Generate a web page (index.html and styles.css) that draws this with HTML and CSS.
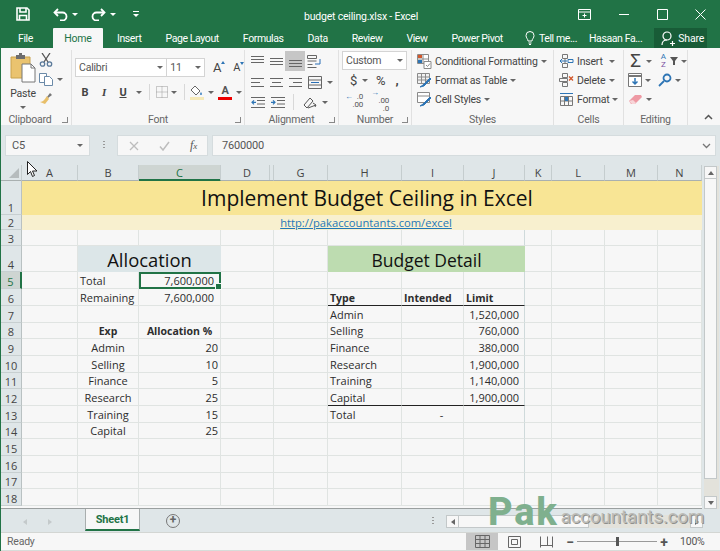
FILE: index.html
```html
<!DOCTYPE HTML>
<html>
	<head>
		<meta http-equiv="Content-Type" content="text/html; charset=UTF-8" />
		<title>budget ceiling.xlsx - Excel</title>
		<link rel="stylesheet" href="styles.css">
	</head>
	<body>
		<div class="app">
			<div class="titlebar">
				<div class="qat">
					<svg class="qat_save" width="14" height="14" viewBox="0 0 14 14" fill="none" stroke="#fff" stroke-width="1.6"><path d="M1 1h10l2 2v10H1z"/><path d="M4 1v4h6V1M3.500 13V8.500h7V13"/></svg>
					<svg class="qat_undo" width="15" height="13" viewBox="0 0 15 13" fill="none" stroke="#fff" stroke-width="1.8"><path d="M5 1 1.500 4.500 5 8"/><path d="M2 4.500h7.500a4 4 0 0 1 0 8H7"/></svg>
					<span class="caret caret--white"></span>
					<svg class="qat_redo" width="15" height="13" viewBox="0 0 15 13" fill="none" stroke="#fff" stroke-width="1.8"><path d="M10 1l3.500 3.500L10 8"/><path d="M13 4.500H5.500a4 4 0 0 0 0 8H8"/></svg>
					<span class="caret caret--white"></span>
					<span class="qat_more"><i></i><span class="caret caret--white"></span></span>
				</div>
				<div class="doc_title">budget ceiling.xlsx - Excel</div>
				<div class="win_btns">
					<svg width="13" height="11" viewBox="0 0 13 11" fill="none" stroke="#fff"><path d="M.5.500h12v10H.5zM.5 3h12M6.500 4.500v4M4.500 6.500h4"/></svg>
					<svg width="12" height="11" viewBox="0 0 12 11" fill="none" stroke="#fff"><path d="M1 5.500h10"/></svg>
					<svg width="11" height="11" viewBox="0 0 11 11" fill="none" stroke="#fff"><path d="M.5.500h10v10H.5z"/></svg>
					<svg width="11" height="11" viewBox="0 0 11 11" fill="none" stroke="#fff"><path d="M.5.500l10 10M10.500.500l-10 10"/></svg>
				</div>
			</div>

			<div class="tabs">
				<span class="tab tab--file">File</span>
				<span class="tab tab--on">Home</span>
				<span class="tab">Insert</span>
				<span class="tab">Page Layout</span>
				<span class="tab">Formulas</span>
				<span class="tab">Data</span>
				<span class="tab">Review</span>
				<span class="tab">View</span>
				<span class="tab">Power Pivot</span>
				<span class="tab tab--tell">
					<svg width="10" height="14" viewBox="0 0 10 14" fill="none" stroke="#fff"><path d="M3 10C3 8 1 7 1 4.500a4 4 0 0 1 8 0C9 7 7 8 7 10zM3.500 12h3M4 13.500h2"/></svg>
					Tell me...
				</span>
				<span class="tab tab--user">Hasaan Fa...</span>
				<span class="share">
					<svg width="14" height="15" viewBox="0 0 14 15" fill="none" stroke="#fff" stroke-width="1.200"><circle cx="6" cy="5" r="4"/><path d="M1 14c0-3 2-5 5-5M9 12.500h5M11.500 10v5"/></svg>
					Share
				</span>
			</div>

			<div class="ribbon">
				<div class="group group--clipboard">
					<div class="group_body clip">
						<div class="paste">
							<svg width="26" height="30" viewBox="0 0 26 30"><path d="M1 4h19v21H1z" fill="#eac36f" stroke="#c9a24c"/><path d="M6 2h3V0h3v2h3v4H6z" fill="#6d6d6d"/><path d="M12 11h9l4 4v14H12z" fill="#fff" stroke="#777"/><path d="M21 11v4h4" fill="none" stroke="#777"/></svg>
							<span class="paste_label">Paste</span>
							<span class="caret"></span>
						</div>
						<div class="clip_tools">
							<svg width="14" height="14" viewBox="0 0 14 14" fill="none" stroke="#5b7a9a" stroke-width="1.300"><path d="M3 0l6 9M11 0L5 9" stroke="#555"/><circle cx="3.500" cy="11" r="2.200"/><circle cx="10.500" cy="11" r="2.200"/></svg>
							<div class="tool_row">
								<svg width="14" height="13" viewBox="0 0 14 13" fill="#fff" stroke="#6b8aa8"><path d="M.5.500h7v9h-7z"/><path d="M5.500 3.500h5l3 3v6h-8z"/></svg>
								<span class="caret"></span>
							</div>
							<svg width="14" height="13" viewBox="0 0 14 13"><path d="M8 5l3-4 2 2-4 3z" fill="#777"/><path d="M8 4l2 3-4 5-5-2c3 0 5-3 7-6z" fill="#e8bf6a"/></svg>
						</div>
					</div>
					<div class="group_label">Clipboard<i class="launcher"></i></div>
				</div>

				<div class="group group--font">
					<div class="group_body font_body">
						<div class="tool_row">
							<div class="combo combo--font">
								<span class="combo_part combo_part--name">Calibri<span class="caret"></span></span>
								<span class="combo_part combo_part--size">11<span class="caret"></span></span>
							</div>
							<span class="grow_a">A<i class="mini mini--up"></i></span>
							<span class="shrink_a">A<i class="mini mini--down"></i></span>
						</div>
						<div class="tool_row font_row2">
							<b class="fmt">B</b>
							<i class="fmt fmt--i">I</i>
							<u class="fmt">U</u>
							<span class="caret"></span>
							<span class="vline"></span>
							<svg width="12" height="12" viewBox="0 0 12 12" fill="none" stroke="#9a9a9a" stroke-dasharray="1 1"><path d="M.5.500h11v11H.500zM6 .5v11M.5 6h11"/></svg>
							<span class="caret caret--border"></span>
							<span class="vline vline--fill"></span>
							<span class="color_btn">
								<svg width="13" height="11" viewBox="0 0 13 11"><path d="M5 1l5 5-4 4-5-5z" fill="#fff" stroke="#666"/><path d="M11 7c1 1.500 1.500 3 0 3s-1-1.500 0-3z" fill="#3a7fc0"/></svg>
								<i class="swatch swatch--fill"></i>
							</span>
							<span class="caret"></span>
							<span class="color_btn color_btn--a">A<i class="swatch swatch--red"></i></span>
							<span class="caret"></span>
						</div>
					</div>
					<div class="group_label">Font<i class="launcher"></i></div>
				</div>

				<div class="group group--align">
					<div class="group_body align_body">
						<div class="align_row">
							<i class="lines lines--top"></i>
							<i class="lines lines--mid"></i>
							<span class="align_on"><i class="lines lines--bot"></i></span>
							<svg width="14" height="13" viewBox="0 0 14 13" fill="none" stroke="#666"><path d="M.5.500h9v3h-9zM.5 6h9M.5 9.500h5M.5 12.500h9"/><path d="M13 4v5H8" stroke="#2a6fb5"/></svg>
						</div>
						<div class="align_row">
							<i class="lines lines--left"></i>
							<i class="lines lines--center"></i>
							<i class="lines lines--right"></i>
							<svg width="14" height="13" viewBox="0 0 14 13" fill="none" stroke="#666"><path d="M.5.500h13v12H.5zM.5 4h13M.5 9h13"/><path d="M3 6.500h8" stroke="#2a6fb5"/></svg>
							<span class="caret"></span>
						</div>
						<div class="align_row">
							<svg width="14" height="11" viewBox="0 0 14 11" fill="none" stroke="#666"><path d="M0 .5h14M6 3.500h8M6 7h8M0 10.500h14"/><path d="M5 5.300H1M3 3.300l-2 2 2 2" stroke="#2e75b5" stroke-width="1.200"/></svg>
							<svg width="14" height="11" viewBox="0 0 14 11" fill="none" stroke="#666"><path d="M0 .5h14M6 3.500h8M6 7h8M0 10.500h14"/><path d="M0 5.300h4M2 3.300l2 2-2 2" stroke="#2e75b5" stroke-width="1.200"/></svg>
							<span class="vline vline--align"></span>
							<svg width="14" height="13" viewBox="0 0 14 13" fill="none" stroke="#555"><path d="M1 9l6-7 3 3-6 7zM5 12l8-3M10 7l3 2-1 2" /></svg>
							<span class="caret"></span>
						</div>
					</div>
					<div class="group_label">Alignment<i class="launcher"></i></div>
				</div>

				<div class="group group--number">
					<div class="group_body number_body">
						<div class="combo combo--number">Custom<span class="caret"></span></div>
						<div class="tool_row num_row">
							<span class="num_sym">$</span><span class="caret"></span>
							<span class="num_sym num_sym--pct">%</span>
							<b class="num_comma">,</b>
						</div>
						<div class="tool_row num_row num_row--dec">
							<span class="dec"><em>&#x2190;</em>.0<br>.00</span>
							<span class="dec"><em>&#x2192;</em>.00<br>.0</span>
						</div>
					</div>
					<div class="group_label">Number<i class="launcher"></i></div>
				</div>

				<div class="group group--styles">
					<div class="group_body stack">
						<div class="tool_row">
							<svg width="15" height="15" viewBox="0 0 15 15" fill="#fff" stroke="#8a8a8a"><path d="M.5.500h11v9H.5z"/><path d="M1 1h4v3H1z" fill="#d2572b" stroke="none"/><path d="M1 6h4v3H1z" fill="#2e75b5" stroke="none"/><path d="M6 .5v9M.5 5h11"/><path d="M7 7.500h7v7H7z"/><path d="M9 11l1.500 1.500L13 9.500" fill="none"/></svg>
							<span class="stack_text">Conditional Formatting</span><span class="caret"></span>
						</div>
						<div class="tool_row">
							<svg width="15" height="15" viewBox="0 0 15 15" fill="#f2f2f2" stroke="#8a8a8a"><path d="M.5.500h12v10H.5zM4.500.5v10M8.500.5v10M.5 4h12M.5 7h12"/><path d="M3 14l3-2 7-7 1 1-7 7z" fill="#2e75b5" stroke="#2e75b5"/></svg>
							<span class="stack_text">Format as Table</span><span class="caret"></span>
						</div>
						<div class="tool_row">
							<svg width="15" height="15" viewBox="0 0 15 15" fill="#fff" stroke="#8a8a8a"><path d="M.5.500h12v10H.5z"/><path d="M.5 4h12"/><path d="M3 14l3-2 7-7 1 1-7 7z" fill="#2e75b5" stroke="#2e75b5"/></svg>
							<span class="stack_text">Cell Styles</span><span class="caret"></span>
						</div>
					</div>
					<div class="group_label">Styles</div>
				</div>

				<div class="group group--cells">
					<div class="group_body stack">
						<div class="tool_row">
							<svg width="15" height="14" viewBox="0 0 15 14" fill="none" stroke="#777"><path d="M3.500.500h5v4h-5zM3.500 9.500h5v4h-5zM6 4.500v5"/><path d="M9 5.500h5v3H9z" stroke="#2e75b5"/><path d="M1 7h7M3 5 1 7l2 2" stroke="#2e75b5"/></svg>
							<span class="stack_text">Insert</span><span class="caret caret--far"></span>
						</div>
						<div class="tool_row">
							<svg width="15" height="14" viewBox="0 0 15 14" fill="none" stroke="#777"><path d="M3.500.500h5v4h-5zM3.500 9.500h5v4h-5zM.5 5.500h8v3h-8z"/><path d="M10 3.500l4 4M14 3.500l-4 4" stroke="#d2572b" stroke-width="1.400"/></svg>
							<span class="stack_text">Delete</span><span class="caret caret--far"></span>
						</div>
						<div class="tool_row">
							<svg width="15" height="14" viewBox="0 0 15 14" fill="none" stroke="#777"><path d="M1.500 4.500h12v9h-12zM1.500 9h12M5.500 4.500v9M9.500 4.500v9"/><path d="M6 5h3v4H6z" fill="#2e75b5" stroke="none"/><path d="M1 1.500h13" stroke="#2e75b5"/></svg>
							<span class="stack_text">Format</span><span class="caret"></span>
						</div>
					</div>
					<div class="group_label">Cells</div>
				</div>

				<div class="group group--edit">
					<div class="group_body stack stack--edit">
						<div class="tool_row">
							<span class="sigma">&#x3A3;</span><span class="caret"></span>
							<span class="sort"><em>A</em><em class="sort_z">Z</em></span>
							<svg width="8" height="8" viewBox="0 0 8 8"><path d="M0 0h8L5 4v4H3V4z" fill="#555"/></svg>
							<span class="caret"></span>
						</div>
						<div class="tool_row">
							<svg width="14" height="14" viewBox="0 0 14 14" fill="#fff" stroke="#777"><path d="M.5.500h13v13H.5z"/><path d="M.5 3h13" stroke-width="2"/><path d="M7 5v6M4.500 8.500 7 11l2.500-2.500" fill="none" stroke="#2e75b5" stroke-width="1.500"/></svg>
							<span class="caret"></span>
							<svg class="find" width="14" height="14" viewBox="0 0 14 14" fill="none" stroke="#2e75b5" stroke-width="1.800"><circle cx="9" cy="5" r="3.500"/><path d="M6 8l-5 5"/></svg>
							<span class="caret"></span>
						</div>
						<div class="tool_row">
							<svg width="15" height="11" viewBox="0 0 15 11"><path d="M1 7l6-6h6l1 2-7 7H3z" fill="#ee9aa4"/><path d="M1 7l3 3h3l1-1-3-3z" fill="#f7d5d8"/></svg>
							<span class="caret"></span>
						</div>
					</div>
					<div class="group_label">Editing</div>
				</div>

				<div class="collapse_btn">
					<svg width="9" height="6" viewBox="0 0 9 6" fill="none" stroke="#555" stroke-width="1.500"><path d="M1 5l3.500-3.500L8 5"/></svg>
				</div>
			</div>

			<div class="formulabar">
				<div class="namebox">C5<span class="caret"></span></div>
				<span class="grip"></span>
				<div class="fx_btns">
					<svg width="10" height="10" viewBox="0 0 10 10" fill="none" stroke="#bdbdbd" stroke-width="1.300"><path d="M1 1l8 8M9 1 1 9"/></svg>
					<svg width="11" height="10" viewBox="0 0 11 10" fill="none" stroke="#bdbdbd" stroke-width="1.500"><path d="M1 5.500 4 9l6-8"/></svg>
					<em class="fx">f<small>x</small></em>
				</div>
				<div class="formula_input">7600000<svg width="9" height="6" viewBox="0 0 9 6" fill="none" stroke="#777" stroke-width="1.300"><path d="M1 1l3.500 3.500L8 1"/></svg></div>
			</div>

			<div class="sheet">
				<div class="grid_wrap">
					<table class="grid">
						<colgroup>
							<col class="c_rh"><col class="c_a"><col class="c_b"><col class="c_c"><col class="c_d"><col class="c_g"><col class="c_h"><col class="c_i"><col class="c_j"><col class="c_k"><col class="c_l"><col class="c_m"><col class="c_n">
						</colgroup>
						<tr class="head">
							<th class="corner"><i></i></th><th>A</th><th>B</th><th class="col_sel">C</th><th class="dbl">D</th><th>G</th><th>H</th><th>I</th><th>J</th><th>K</th><th>L</th><th>M</th><th>N</th>
						</tr>
						<tr class="r1">
							<th>1</th><td colspan="12" class="title_cell">Implement Budget Ceiling in Excel</td>
						</tr>
						<tr class="r2">
							<th>2</th><td colspan="12" class="link_cell"><a>http://pakaccountants.com/excel</a></td>
						</tr>
						<tr class="r3">
							<th>3</th><td></td><td></td><td></td><td></td><td></td><td></td><td></td><td class="thick"></td><td></td><td></td><td></td><td></td>
						</tr>
						<tr class="r4">
							<th>4</th><td></td><td colspan="2" class="alloc_head">Allocation</td><td></td><td></td><td colspan="3" class="detail_head">Budget Detail</td><td></td><td></td><td></td><td></td>
						</tr>
						<tr>
							<th class="row_sel">5</th><td></td><td>Total</td><td class="num sel">7,600,000</td><td></td><td></td><td></td><td></td><td class="thick"></td><td></td><td></td><td></td><td></td>
						</tr>
						<tr>
							<th>6</th><td></td><td>Remaining</td><td class="num">7,600,000</td><td></td><td></td><td class="bold under">Type</td><td class="bold under">Intended</td><td class="bold under thick">Limit</td><td></td><td></td><td></td><td></td>
						</tr>
						<tr>
							<th>7</th><td></td><td></td><td></td><td></td><td></td><td>Admin</td><td></td><td class="lim thick">1,520,000</td><td></td><td></td><td></td><td></td>
						</tr>
						<tr class="short">
							<th>8</th><td></td><td class="mid bold">Exp</td><td class="mid bold">Allocation %</td><td></td><td></td><td>Selling</td><td></td><td class="lim thick">760,000</td><td></td><td></td><td></td><td></td>
						</tr>
						<tr>
							<th>9</th><td></td><td class="mid">Admin</td><td class="pct">20</td><td></td><td></td><td>Finance</td><td></td><td class="lim thick">380,000</td><td></td><td></td><td></td><td></td>
						</tr>
						<tr>
							<th>10</th><td></td><td class="mid">Selling</td><td class="pct">10</td><td></td><td></td><td>Research</td><td></td><td class="lim thick">1,900,000</td><td></td><td></td><td></td><td></td>
						</tr>
						<tr class="short">
							<th>11</th><td></td><td class="mid">Finance</td><td class="pct">5</td><td></td><td></td><td>Training</td><td></td><td class="lim thick">1,140,000</td><td></td><td></td><td></td><td></td>
						</tr>
						<tr>
							<th>12</th><td></td><td class="mid">Research</td><td class="pct">25</td><td></td><td></td><td class="under">Capital</td><td class="under"></td><td class="lim under thick">1,900,000</td><td></td><td></td><td></td><td></td>
						</tr>
						<tr>
							<th>13</th><td></td><td class="mid">Training</td><td class="pct">15</td><td></td><td></td><td>Total</td><td class="dash">-</td><td class="thick"></td><td></td><td></td><td></td><td></td>
						</tr>
						<tr class="short">
							<th>14</th><td></td><td class="mid">Capital</td><td class="pct">25</td><td></td><td></td><td></td><td></td><td class="thick"></td><td></td><td></td><td></td><td></td>
						</tr>
						<tr>
							<th>15</th><td></td><td></td><td></td><td></td><td></td><td></td><td></td><td class="thick"></td><td></td><td></td><td></td><td></td>
						</tr>
						<tr>
							<th>16</th><td></td><td></td><td></td><td></td><td></td><td></td><td></td><td class="thick"></td><td></td><td></td><td></td><td></td>
						</tr>
						<tr class="short">
							<th>17</th><td></td><td></td><td></td><td></td><td></td><td></td><td></td><td class="thick"></td><td></td><td></td><td></td><td></td>
						</tr>
						<tr>
							<th>18</th><td></td><td></td><td></td><td></td><td></td><td></td><td></td><td class="thick"></td><td></td><td></td><td></td><td></td>
						</tr>
					</table>
				</div>
				<div class="vscroll">
					<span class="sb_btn"><i class="tri tri--up"></i></span>
					<span class="sb_thumb"></span>
					<span class="sb_track"></span>
					<span class="sb_btn"><i class="tri tri--down"></i></span>
				</div>
			</div>

			<div class="sheetbar">
				<div class="sheet_nav"><i class="tri tri--left tri--faint"></i><i class="tri tri--right tri--faint"></i></div>
				<div class="sheet_tab">Sheet1</div>
				<span class="add_sheet">+</span>
				<span class="split_dots"></span>
				<div class="hscroll">
					<span class="sb_btn"><i class="tri tri--left"></i></span>
					<span class="hs_thumb"></span>
					<span class="hs_track"></span>
					<span class="sb_btn"><i class="tri tri--right"></i></span>
				</div>
			</div>

			<div class="statusbar">
				<span class="ready">Ready</span>
				<div class="views">
					<span class="view view--on"><svg width="15" height="13" viewBox="0 0 15 13" fill="none" stroke="#666"><path d="M.5.500h14v12H.5zM5 .5v12M10 .5v12M.5 4.500h14M.5 8.500h14"/></svg></span>
					<span class="view"><svg width="13" height="12" viewBox="0 0 13 12" fill="none" stroke="#666"><path d="M.5.500h12v11H.5zM3.500 3.500h6v5h-6z"/></svg></span>
					<span class="view"><svg width="13" height="12" viewBox="0 0 13 12" fill="none" stroke="#666"><path d="M.5 9.500h12M.5.500v11M12.500.500v11M7.500.500v9"/></svg></span>
				</div>
				<span class="zoom_sign">&#x2212;</span>
				<div class="zoom_slider"><i></i></div>
				<span class="zoom_sign">+</span>
				<span class="zoom_pct">100%</span>
			</div>

			<!-- overlays -->
			<svg class="pointer" width="11" height="16" viewBox="0 0 11 16"><path d="M.5.500v13l3-3 2 5 2-1-2-4.500h4.500z" fill="#fff" stroke="#222"/></svg>
			<div class="watermark"><b>Pak</b><span>accountants.com</span></div>
		</div>
	</body>
</html>
```

FILE: styles.css
```css
* {
	box-sizing: border-box;
}
html, body {
	margin: 0;
	padding: 0;
}
body {
	font-family: Roboto, "Open Sans", sans-serif;
	font-size: 10.5px;
	letter-spacing: -0.2px;
	color: #444;
}
i, em {
	font-style: normal;
}
svg {
	display: block;
	flex: none;
}
.app {
	position: relative;
	width: 720px;
	height: 551px;
	display: flex;
	flex-direction: column;
	overflow: hidden;
	background: #f7f7f7;
	border-left: 1px solid #217346;
}

/* small arrows */
.caret {
	display: inline-block;
	flex: none;
	width: 0;
	height: 0;
	margin-left: 5px;
	border: 3px solid transparent;
	border-top: 3px solid #666;
	border-bottom: 0;
}
.caret--white {
	border-top-color: #fff;
}
.tri {
	display: block;
	width: 0;
	height: 0;
	border: 3px solid transparent;
}
.tri--up { border-top: 0; border-bottom: 4px solid #666; }
.tri--down { border-bottom: 0; border-top: 4px solid #666; }
.tri--left { border-left: 0; border-right: 4px solid #666; }
.tri--right { border-right: 0; border-left: 4px solid #666; }
.tri--left.tri--faint { border-right-color: #c4cacb; }
.tri--right.tri--faint { border-left-color: #c4cacb; }

/* title bar */
.titlebar {
	height: 28px;
	flex: none;
	display: grid;
	grid-template-columns: 303px auto 1fr;
	align-items: center;
	background: #217346;
	color: #fff;
}
.qat {
	display: flex;
	align-items: center;
}
.qat_save { margin-left: 15px; }
.qat_undo { margin-left: 23px; }
.qat_redo { margin-left: 13px; }
.qat .caret { margin-left: 4px; }
.qat_more {
	margin-left: 17px;
	display: flex;
	flex-direction: column;
	align-items: center;
	gap: 2px;
}
.qat_more i {
	width: 6px;
	height: 1px;
	background: #fff;
}
.qat_more .caret {
	margin: 0;
}
.doc_title {
	padding-top: 5px;
}
.win_btns {
	display: flex;
	align-items: center;
	justify-content: flex-end;
	gap: 27px;
	padding-right: 14px;
}

/* tabs */
.tabs {
	height: 20px;
	flex: none;
	display: flex;
	align-items: stretch;
	background: #217346;
	color: #fff;
	letter-spacing: -0.4px;
	white-space: nowrap;
}
.tab {
	flex: none;
	display: flex;
	align-items: center;
	gap: 4px;
	padding: 0 12px;
}
.tab--file {
	width: 52px;
	padding: 0 0 0 17px;
}
.tab--on {
	width: 50px;
	justify-content: center;
	padding: 0;
	margin-right: 2px;
	background: #f7f7f7;
	color: #217346;
	letter-spacing: -0.2px;
	border-radius: 1px 1px 0 0;
}
.tab--tell {
	padding: 0 0 0 10px;
}
.share {
	flex: none;
	width: 53px;
	margin-left: auto;
	margin-right: 13px;
	display: flex;
	align-items: center;
	gap: 3px;
	padding-left: 7px;
	background: #185c37;
	letter-spacing: -0.2px;
}

/* ribbon */
.ribbon {
	position: relative;
	height: 77px;
	flex: none;
	display: flex;
	padding-top: 2px;
	background: #f7f7f7;
}
.group {
	display: flex;
	flex-direction: column;
	border-right: 1px solid #e1e1e1;
}
.group_body {
	flex: 1;
	min-height: 0;
}
.group_label {
	position: relative;
	height: 13px;
	text-align: center;
	line-height: 15px;
	color: #666;
}
.launcher {
	position: absolute;
	right: 3px;
	top: 5px;
	width: 6px;
	height: 6px;
	border-left: 1px solid #888;
	border-bottom: 1px solid #888;
	transform: scaleX(-1);
}
.group--clipboard { width: 71px; padding-right: 12px; }
.group--clipboard .group_label { margin-right: -12px; padding-right: 12px; }
.group--font { width: 173px; }
.group--align { width: 94px; }
.group--number { width: 73px; }
.group--styles { width: 142px; }
.group--cells { width: 70px; }
.group--edit { width: 64px; }
.tool_row {
	display: flex;
	align-items: center;
}

.clip {
	display: flex;
	padding: 3px 0 0 9px;
}
.paste {
	width: 29px;
	display: flex;
	flex-direction: column;
	align-items: center;
}
.paste .caret {
	margin: 5px 0 0;
}
.paste_label {
	margin-top: 4px;
	line-height: 14px;
	color: #444;
}
.clip_tools {
	padding-left: 3px;
	display: flex;
	flex-direction: column;
	gap: 6px;
}
.clip_tools .tool_row .caret {
	margin-left: 4px;
}

.font_body {
	padding: 8px 0 0 3px;
}
.combo {
	display: flex;
	background: #fff;
	border: 1px solid #d4d4d4;
	color: #555;
	line-height: 17px;
}
.combo--font {
	width: 130px;
	height: 19px;
}
.combo_part {
	display: flex;
	align-items: center;
	justify-content: space-between;
	padding: 0 3px;
}
.combo_part--name { width: 92px; border-right: 1px solid #d4d4d4; }
.combo_part--size { width: 37px; }
.grow_a, .shrink_a {
	position: relative;
	color: #444;
	font-size: 13px;
	margin-left: 5px;
	width: 15px;
	text-align: center;
}
.shrink_a {
	font-size: 11px;
	margin-left: 5px;
}
.mini {
	position: absolute;
	right: 0;
	top: 1px;
	border: 2px solid transparent;
}
.mini--up { border-top: 0; border-bottom: 3px solid #2e75b5; }
.mini--down { border-bottom: 0; border-top: 3px solid #2e75b5; }
.font_row2 {
	margin-top: 6px;
	padding-left: 4px;
	height: 18px;
}
.fmt {
	width: 12px;
	text-align: center;
	font-size: 11px;
	color: #444;
	margin-right: 7px;
	font-weight: bold;
}
.fmt--i {
	font-family: "Liberation Serif", serif;
	font-style: italic;
}
.font_row2 .caret {
	margin-left: 0;
}
.font_row2 .caret--border {
	margin-left: 3px;
}
.vline {
	width: 1px;
	height: 16px;
	margin: 0 6px 0 7px;
	background: #d8d8d8;
}
.vline--fill {
	margin-right: 5px;
}
.color_btn {
	position: relative;
	width: 14px;
	height: 15px;
	margin-right: 4px;
}
.color_btn--a {
	margin-left: 4px;
	text-align: center;
	font-size: 11px;
	line-height: 12px;
	font-weight: bold;
	color: #555;
}
.swatch {
	position: absolute;
	left: 0;
	right: 0;
	bottom: 0;
	height: 3px;
}
.swatch--fill { background: #f5e9b8; }
.swatch--red { background: #ee0000; }

.align_body {
	display: flex;
	flex-direction: column;
	padding-left: 6px;
}
.align_row {
	height: 20px;
	display: flex;
	align-items: center;
	gap: 6px;
}
.align_row:nth-child(1) { height: 22px; }
.align_row .caret { margin-left: -1px; }
.align_on {
	display: flex;
	align-items: center;
	justify-content: center;
	width: 20px;
	height: 20px;
	margin: 0 -4px;
	background: #c6c6c6;
}
.lines {
	display: block;
	flex: none;
	width: 13px;
	height: 11px;
	background-repeat: no-repeat;
	background-image: linear-gradient(#666, #666), linear-gradient(#666, #666), linear-gradient(#666, #666);
	background-size: 13px 1px;
}
.lines--top { background-position: 0 0, 0 3px, 0 6px; }
.lines--mid { background-position: 0 2px, 0 5px, 0 8px; }
.lines--bot { background-position: 0 4px, 0 7px, 0 10px; }
.lines--left { background-size: 13px 1px, 9px 1px, 13px 1px; background-position: 0 1px, 0 5px, 0 9px; }
.lines--center { background-size: 13px 1px, 9px 1px, 13px 1px; background-position: 0 1px, 2px 5px, 0 9px; }
.lines--right { background-size: 13px 1px, 9px 1px, 13px 1px; background-position: 0 1px, 4px 5px, 0 9px; }
.vline--align {
	margin: 0 3px 0 2px;
}

.number_body {
	padding: 1px 4px 0 3px;
}
.combo--number {
	height: 19px;
	justify-content: space-between;
	align-items: center;
	padding: 0 3px;
}
.num_row {
	height: 19px;
	margin-top: 1px;
	padding-left: 8px;
}
.num_sym {
	font-size: 13px;
	color: #444;
}
.num_sym--pct { margin-left: 8px; }
.num_comma {
	margin-left: 10px;
	font-size: 13px;
	line-height: 8px;
}
.num_row--dec {
	padding-left: 3px;
	gap: 8px;
}
.dec {
	width: 18px;
	font-size: 8px;
	line-height: 8px;
	text-align: right;
	color: #555;
}
.dec em {
	color: #2e75b5;
	float: left;
}

.stack {
	padding: 2px 0 0 5px;
	display: flex;
	flex-direction: column;
	gap: 1px;
}
.stack .tool_row {
	height: 18px;
}
.stack_text {
	margin-left: 3px;
	color: #444;
	white-space: nowrap;
}
.stack .caret {
	margin-left: 3px;
}
.stack .caret--far {
	margin-left: auto;
	margin-right: 8px;
}
.sigma {
	width: 16px;
	font-size: 19px;
	line-height: 18px;
	color: #444;
	text-align: center;
}
.sort {
	width: 10px;
	margin: 0 2px 0 6px;
	font-size: 8px;
	line-height: 8px;
	color: #2e75b5;
	text-align: center;
}
.sort em { display: block; }
.sort_z { color: #7a4fa0; }
.find {
	margin-left: 7px;
}
.stack--edit {
	padding-left: 4px;
}
.collapse_btn {
	position: absolute;
	right: 7px;
	bottom: 5px;
}

/* formula bar */
.formulabar {
	height: 40px;
	flex: none;
	display: flex;
	align-items: flex-start;
	padding: 10px 4px 0 4px;
	background: #dfe6e8;
}
.namebox {
	width: 85px;
	height: 21px;
	display: flex;
	align-items: center;
	justify-content: space-between;
	padding: 0 6px;
	background: #f7f7f7;
	border: 1px solid #d5dcde;
	color: #555;
	font-size: 11px;
}
.grip {
	width: 2px;
	height: 9px;
	margin: 6px 12px 0 13px;
	background: repeating-linear-gradient(#999 0 1px, transparent 1px 3px);
}
.fx_btns {
	width: 91px;
	height: 21px;
	display: flex;
	align-items: center;
	justify-content: space-between;
	padding: 0 10px 0 11px;
	background: #f7f7f7;
	border: 1px solid #d5dcde;
}
.fx {
	font-family: "Liberation Serif", serif;
	font-style: italic;
	font-size: 12px;
	color: #555;
}
.fx small {
	font-size: 9px;
}
.formula_input {
	flex: 1;
	height: 21px;
	margin-left: 4px;
	display: flex;
	align-items: center;
	justify-content: space-between;
	padding: 0 4px 0 9px;
	background: #f7f7f7;
	border: 1px solid #d5dcde;
	color: #555;
	font-size: 11px;
}

/* worksheet */
.sheet {
	height: 344px;
	flex: none;
	display: flex;
	background: #dfe6e8;
}
.grid_wrap {
	width: 701px;
	height: 344px;
	overflow: hidden;
	background: #f7f7f7;
	border-bottom: 1px solid #9a9f9f;
}
.grid {
	width: 701px;
	table-layout: fixed;
	border-collapse: separate;
	border-spacing: 0;
	font-family: "Open Sans", sans-serif;
	font-size: 11px;
	letter-spacing: 0;
	color: #2d2d2d;
}
.c_rh { width: 21px; }
.c_a { width: 56px; }
.c_b { width: 61px; }
.c_c { width: 82px; }
.c_d { width: 53px; }
.c_g { width: 54px; }
.c_h { width: 74px; }
.c_i { width: 62px; }
.c_j { width: 61px; }
.c_k { width: 27px; }
.c_l { width: 53px; }
.c_m { width: 53px; }
.c_n { width: 44px; }
.grid tr {
	height: 17px;
}
.grid tr.short {
	height: 16px;
}
.grid th {
	padding: 0;
	background: #dfe6e8;
	font-weight: normal;
	font-size: 11px;
	line-height: 12px;
	color: #444;
	text-align: center;
	vertical-align: bottom;
	border-bottom: 1px solid #c7cfd0;
	border-right: 1px solid #b9c1c2;
}
.grid .head {
	height: 16px;
}
.grid .head th {
	vertical-align: middle;
	border-right: 1px solid #c5cdce;
	border-bottom: 1px solid #a9b0b0;
}
.grid .head .dbl {
	box-shadow: inset -3px 0 0 #dfe6e8, inset -4px 0 0 #c5cdce;
}
.corner {
	position: relative;
}
.corner i {
	position: absolute;
	right: 2px;
	bottom: 2px;
	border-style: solid;
	border-width: 0 0 10px 10px;
	border-color: transparent transparent #b6bcbd transparent;
}
.grid .head .col_sel {
	background: #ced5d2;
	color: #217346;
	border-bottom: 1px solid #217346;
	box-shadow: inset 0 -1px 0 #217346;
}
.grid .row_sel {
	background: #ced5d2;
	color: #217346;
	border-right: 2px solid #217346;
}
.grid td {
	padding: 0 2px;
	line-height: 14px;
	white-space: nowrap;
	vertical-align: bottom;
	border-right: 1px solid #e0e4e2;
	border-bottom: 1px solid #e0e4e2;
}
.grid .r1 { height: 34px; }
.grid .r2 { height: 15px; }
.grid .r3 { height: 16px; }
.grid .r4 { height: 26px; }
.grid .title_cell {
	padding: 0 0 3px 10px;
	background: #f8e595;
	border: 0;
	text-align: center;
	font-size: 21px;
	line-height: 28px;
	color: #111;
}
.grid .link_cell {
	padding-left: 10px;
	background: #f8f0cf;
	border: 0;
	text-align: center;
	font-size: 11.2px;
	line-height: 14px;
}
.link_cell a {
	color: #1f78b8;
	text-decoration: underline;
}
.grid .alloc_head {
	padding: 0;
	background: #dce6e8;
	text-align: center;
	font-size: 18.400px;
	line-height: 24px;
	color: #111;
	border: 0;
}
.grid .detail_head {
	padding: 0;
	background: #bddcb0;
	text-align: center;
	font-size: 17.500px;
	line-height: 24px;
	color: #111;
	border: 0;
}
.grid .num {
	text-align: right;
	padding-right: 6px;
}
.grid .pct {
	text-align: right;
	padding-right: 2px;
}
.grid .lim {
	text-align: right;
	padding-right: 5px;
}
.grid .mid {
	text-align: center;
}
.grid .dash {
	text-align: center;
	padding-left: 20px;
}
.grid .bold {
	font-weight: bold;
	font-size: 10.5px;
}
.grid .under {
	border-bottom: 1px solid #222;
}
.grid .thick {
	border-right: 1px solid #cfdadb;
}
.grid .sel {
	position: relative;
	outline: 2px solid #217346;
	outline-offset: -2px;
}
.sel::after {
	content: "";
	position: absolute;
	right: -2px;
	bottom: -2px;
	width: 5px;
	height: 5px;
	background: #217346;
	border: 1px solid #f7f7f7;
}

/* scrollbars */
.vscroll {
	width: 15px;
	margin: 1px 0 0 2px;
	display: flex;
	flex-direction: column;
	background: #e3e2db;
}
.sb_btn {
	flex: none;
	width: 13px;
	height: 13px;
	display: flex;
	align-items: center;
	justify-content: center;
	background: #f7f7f7;
	border: 1px solid #c3c8c9;
}
.sb_thumb {
	flex: none;
	height: 301px;
	margin-top: -1px;
	width: 13px;
	background: #f7f7f7;
	border: 1px solid #c3c8c9;
}
.sb_track {
	flex: 1;
}

/* sheet tabs */
.sheetbar {
	height: 24px;
	flex: none;
	display: flex;
	align-items: flex-start;
	background: #dfe6e8;
	border-bottom: 1px solid #d3d6d3;
}
.sheet_nav {
	width: 84px;
	display: flex;
	gap: 21px;
	padding: 10px 0 0 22px;
}
.sheet_tab {
	width: 55px;
	height: 22px;
	background: #f7f7f7;
	border: 1px solid #a9aeae;
	border-top: 0;
	border-bottom: 2px solid #217346;
	text-align: center;
	font-weight: bold;
	font-size: 11px;
	line-height: 22px;
	color: #217346;
}
.add_sheet {
	width: 14px;
	height: 14px;
	margin: 5px 0 0 26px;
	border: 1px solid #777;
	border-radius: 50%;
	text-align: center;
	font-size: 12px;
	line-height: 11px;
	font-weight: bold;
	color: #666;
}
.split_dots {
	width: 2px;
	height: 9px;
	margin: 8px 0 0 252px;
	background: repeating-linear-gradient(#999 0 1px, transparent 1px 3px);
}
.hscroll {
	width: 257px;
	height: 13px;
	margin: 6px 0 0 12px;
	display: flex;
	background: #e3e2db;
}
.hs_thumb {
	width: 130px;
	background: #f7f7f7;
	border: 1px solid #c3c8c9;
	border-left: 0;
}
.hs_track {
	flex: 1;
}

/* status bar */
.statusbar {
	flex: 1;
	display: flex;
	align-items: center;
	background: #f7f7f7;
	border-bottom: 1px solid #d7dcd9;
	color: #666;
}
.ready {
	margin-left: 6px;
	width: 459px;
}
.views {
	display: flex;
	align-self: stretch;
}
.view {
	width: 32px;
	display: flex;
	align-items: center;
	justify-content: center;
}
.view--on {
	background: #c6c6c6;
}
.zoom_sign {
	width: 10px;
	text-align: center;
	font-size: 14px;
	font-weight: bold;
	line-height: 14px;
	color: #555;
}
.views + .zoom_sign {
	margin-left: 3px;
}
.zoom_slider {
	position: relative;
	width: 80px;
	height: 1px;
	margin: 0 2px;
	background: #999;
}
.zoom_slider i {
	position: absolute;
	left: 39px;
	top: -4px;
	width: 3px;
	height: 9px;
	background: #555;
}
.zoom_pct {
	margin-left: 11px;
	color: #555;
}

/* overlays */
.pointer {
	position: absolute;
	left: 26px;
	top: 161px;
}
.watermark {
	position: absolute;
	left: 487px;
	top: 492px;
	display: flex;
	align-items: baseline;
	white-space: nowrap;
}
.watermark b {
	font-size: 38px;
	line-height: 40px;
	font-weight: 800;
	color: #7fb08e;
	letter-spacing: 1.800px;
}
.watermark span {
	position: relative;
	top: -2px;
	margin-left: 2px;
	font-size: 18.500px;
	letter-spacing: 0;
	color: #bcbcb8;
	text-shadow: 1px 1px 0 #8f8f8b;
}
```
